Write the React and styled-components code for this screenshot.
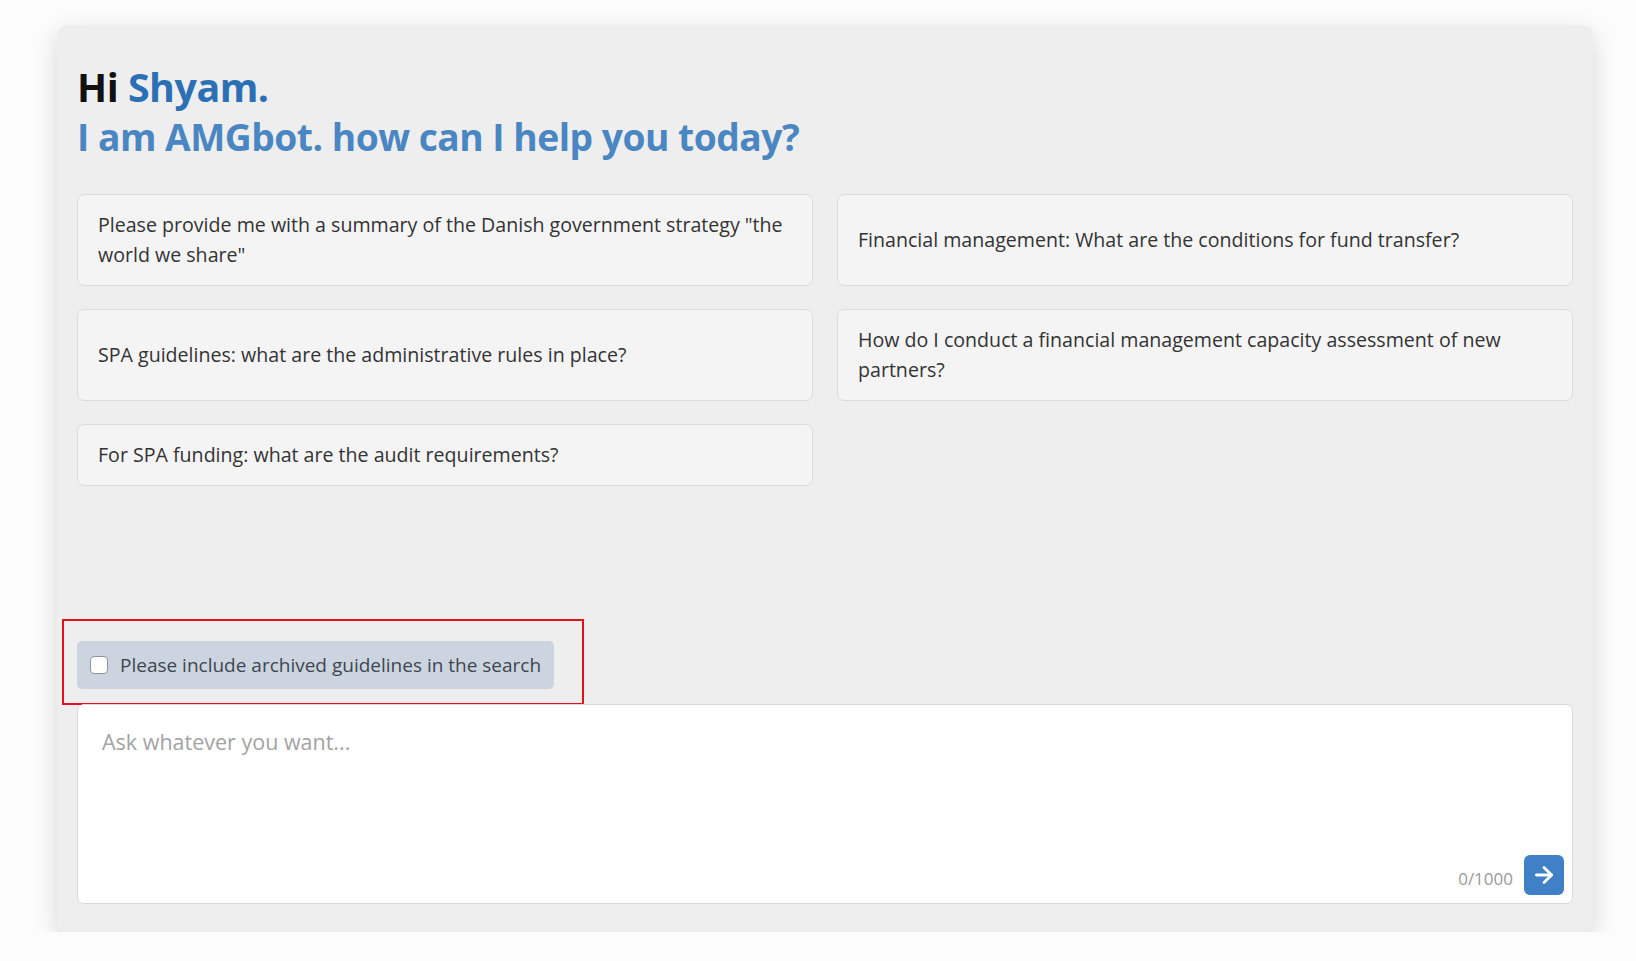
import React from 'react'
import styled, { createGlobalStyle } from 'styled-components'
import { ArrowRight } from 'lucide-react'

const GlobalStyle = createGlobalStyle`
  html, body {
    margin: 0;
    padding: 0;
    background: #fcfcfc;
    font-family: 'Open Sans', 'Noto Sans', sans-serif;
  }
`

const Page = styled.div`
  padding: 25px 0 0 57px;
`
const Panel = styled.main`
  box-sizing: border-box;
  display: flex;
  flex-direction: column;
  width: 1536px;
  height: 907px;
  padding: 37px 20px 28px 20px;
  background: #eeeeee;
  border-radius: 10px;
  box-shadow: 0 8px 24px rgba(0, 0, 0, 0.15);
`
const Greeting = styled.h1`
  margin: 0;
  font-size: ${(props) => props.size || 37}px;
  line-height: 50px;
  font-weight: 700;
  letter-spacing: -0.5px;
  color: ${(props) => props.color || '#111'};
`
const Name = styled.span`
  color: #2b70b5;
`
const Suggestions = styled.div`
  display: grid;
  grid-template-columns: 1fr 1fr;
  gap: 23px 24px;
  margin-top: 32px;
  align-items: stretch;
`
const Suggestion = styled.button`
  display: flex;
  align-items: center;
  box-sizing: border-box;
  padding: 15px 20px;
  min-height: 60px;
  text-align: left;
  font-family: inherit;
  font-size: 19.6px;
  line-height: 30px;
  color: #333;
  background: #f4f4f4;
  border: 1px solid #dcdcdc;
  border-radius: 7px;
  cursor: pointer;
`
const Spacer = styled.div`
  flex: 1;
`
const Archive = styled.label`
  position: relative;
  align-self: flex-start;
  display: flex;
  align-items: center;
  gap: 12px;
  height: 48px;
  padding: 0 13px;
  background: #ccd5df;
  border-radius: 5px;
  font-size: 19px;
  color: #3d4650;
  &:after {
    content: '';
    position: absolute;
    top: -22px;
    left: -15px;
    right: -30px;
    bottom: -16px;
    border: 2px solid #e3101c;
    pointer-events: none;
  }
`
const Check = styled.input`
  appearance: none;
  margin: 0;
  width: 18px;
  height: 18px;
  background: #fff;
  border: 1px solid #8d949b;
  border-radius: 4px;
`
const Composer = styled.div`
  position: relative;
  box-sizing: border-box;
  height: 200px;
  margin-top: 15px;
  background: #fff;
  border: 1px solid #dadada;
  border-radius: 7px;
`
const Prompt = styled.textarea`
  box-sizing: border-box;
  width: 100%;
  height: 100%;
  padding: 22px 24px;
  border: none;
  outline: none;
  resize: none;
  background: transparent;
  font-family: inherit;
  font-size: 21.5px;
  line-height: 30px;
  color: #333;
  &::placeholder {
    color: #a3a3a3;
  }
`
const Footer = styled.div`
  position: absolute;
  right: 8px;
  bottom: 8px;
  display: flex;
  align-items: center;
  gap: 11px;
`
const Counter = styled.span`
  margin-top: 6px;
  font-size: 17px;
  color: #9a9a9a;
`
const Send = styled.button`
  display: flex;
  align-items: center;
  justify-content: center;
  width: 40px;
  height: 40px;
  padding: 0;
  background: #4080c6;
  border: none;
  border-radius: 6px;
  color: #fff;
  cursor: pointer;
`

const questions = [
  'Please provide me with a summary of the Danish government strategy "the world we share"',
  'Financial management: What are the conditions for fund transfer?',
  'SPA guidelines: what are the administrative rules in place?',
  'How do I conduct a financial management capacity assessment of new partners?',
  'For SPA funding: what are the audit requirements?',
]

export default function App() {
  return (
    <>
      <GlobalStyle />
      <Page>
        <Panel>
          <Greeting size={39.4}>
            Hi <Name>Shyam.</Name>
          </Greeting>
          <Greeting size={37.2} color="#4a86c2">
            I am AMGbot. how can I help you today?
          </Greeting>
          <Suggestions>
            {questions.map((q) => (
              <Suggestion key={q}>{q}</Suggestion>
            ))}
          </Suggestions>
          <Spacer />
          <Archive>
            <Check type="checkbox" />
            Please include archived guidelines in the search
          </Archive>
          <Composer>
            <Prompt placeholder="Ask whatever you want..." />
            <Footer>
              <Counter>0/1000</Counter>
              <Send aria-label="Send">
                <ArrowRight size={26} strokeWidth={2.6} />
              </Send>
            </Footer>
          </Composer>
        </Panel>
      </Page>
    </>
  )
}
